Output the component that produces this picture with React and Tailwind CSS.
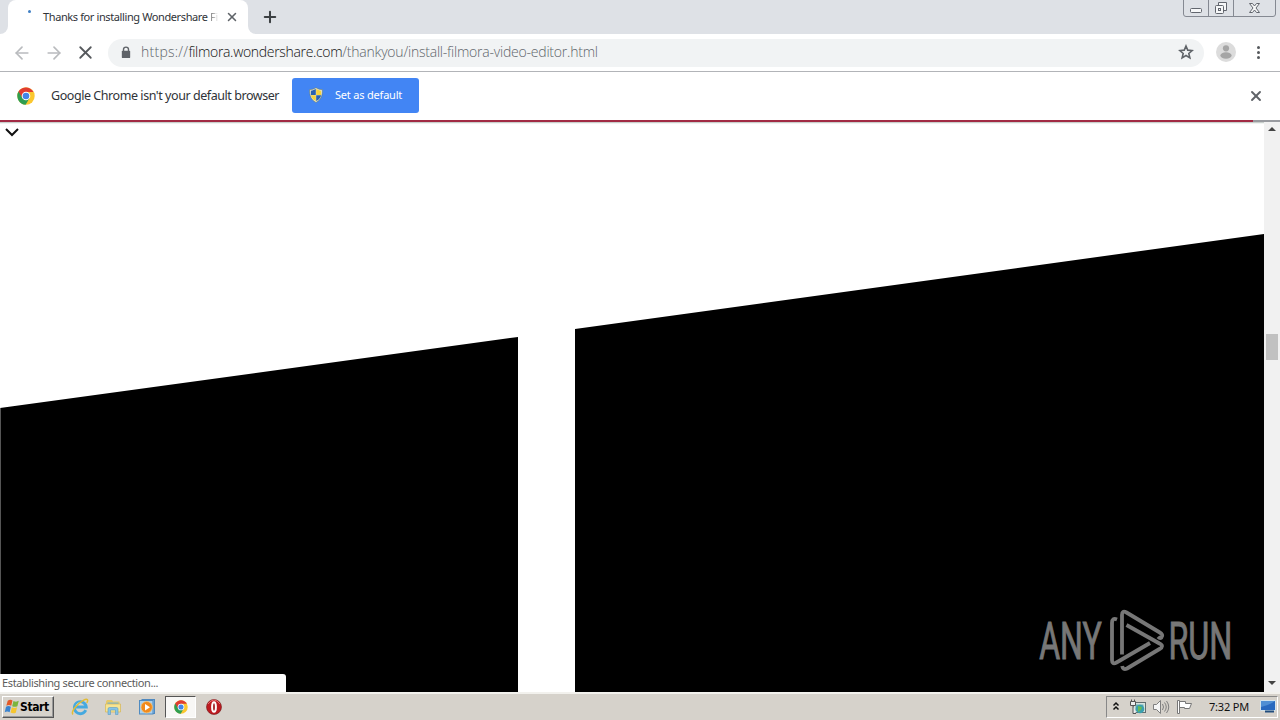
import { ArrowLeft, ArrowRight, Plus, X } from 'lucide-react'

const UI_FONT = "font-['Noto_Sans','Open_Sans',sans-serif]"

function ChromeLogo({ className }) {
  return (
    <svg viewBox="0 0 18 18" className={className}>
      <circle cx="9" cy="9" r="8.7" fill="#fbc72f" />
      <path d="M9 9 1.5 4.6A8.7 8.7 0 0 0 8.6 17.7L12.6 11Z" fill="#2f9e50" />
      <path d="M9 9 5.5 11.2 1.5 4.6A8.7 8.7 0 0 1 16.5 4.9L9 4.9Z" fill="#e03c31" />
      <circle cx="9" cy="9" r="4.3" fill="#fff" />
      <circle cx="9" cy="9" r="3.3" fill="#4285e8" />
    </svg>
  )
}

function Shield() {
  return (
    <svg viewBox="0 0 16 16" className="h-4 w-4">
      <path d="M8 .7C6 2 4 2.5 1.7 2.6 1.4 8 2.7 12.8 8 15.4c5.3-2.6 6.6-7.4 6.3-12.8C12 2.5 10 2 8 .7Z" fill="#e4e6d6" stroke="#69764f" strokeWidth=".5" />
      <path d="M7.8 2.1C6.2 3 4.8 3.5 2.9 3.7v4.2h4.9Z" fill="#2b62b0" />
      <path d="M8.2 2.1c1.6.9 3 1.4 4.9 1.6v4.2H8.2Z" fill="#f7d33c" />
      <path d="M2.9 8.3h4.9v5.8C5 12.7 3.3 10.8 2.9 8.3Z" fill="#f7d33c" />
      <path d="M13.1 8.3H8.2v5.8c2.8-1.4 4.5-3.3 4.9-5.8Z" fill="#2b62b0" />
    </svg>
  )
}

function TabStrip() {
  return (
    <div className="flex h-[34px] shrink-0 bg-[#dee1e6]">
      <div className="flex w-2 items-end bg-white">
        <div className="h-full w-2 rounded-br-lg bg-[#dee1e6]" />
      </div>
      <div className="flex h-full w-[240px] items-center rounded-t-lg bg-white">
        <div className="mb-3 ml-5 h-[3px] w-[3px] rounded-full bg-[#3f7fc4]" />
        <div className="ml-[12px] w-[177px]">
          <div className={`${UI_FONT} whitespace-nowrap text-[11px] tracking-[-0.39px] text-[#303338]`}>
            Thanks for installing Wondershare <span className="bg-linear-to-r from-[#777] to-[#eee] bg-clip-text text-transparent">Fi</span>
          </div>
        </div>
        <X size={14} strokeWidth={2.6} className="ml-[5px] text-[#5f6368]" />
      </div>
      <div className="w-2 bg-white">
        <div className="h-full w-2 rounded-bl-lg bg-[#dee1e6]" />
      </div>
      <div className="flex h-full items-center pl-[5px]">
        <Plus size={18} strokeWidth={2.7} className="text-[#3c4043]" />
      </div>
      <svg viewBox="0 0 94 17" className="ml-auto mr-[3px] h-[17px] w-[94px]" fill="none" stroke="#62666e">
        <path d="M.5 0v14q0 2.500 2.500 2.500h87q2.500 0 2.500-2.500V0M25.500 0v16M50.500 0v16" stroke="#858992" />
        <rect x="7.500" y="8.500" width="11" height="4" rx="1" fill="#f6f7f8" />
        <path d="M35.500 5V2.500h8v8H41" fill="#f6f7f8" />
        <rect x="32.500" y="5.500" width="8" height="8" rx="1" fill="#f6f7f8" />
        <rect x="35.500" y="8.500" width="2" height="2" />
        <path d="M66.500 3.500h3l2 2.500 2-2.500h3l-3.500 4.500 3.500 4.500h-3l-2-2.500-2 2.500h-3L70 8Z" fill="#f6f7f8" />
      </svg>
    </div>
  )
}

function Toolbar() {
  return (
    <div className="flex h-[38px] shrink-0 items-center border-b border-[#b2b4b8] bg-white">
      <ArrowLeft size={20} strokeWidth={2} className="ml-3 text-[#b9bbbe]" />
      <ArrowRight size={20} strokeWidth={2} className="ml-3 text-[#b9bbbe]" />
      <X size={21} strokeWidth={2.1} className="ml-[11px] text-[#55585c]" />
      <div className="ml-3 flex h-7 w-[1096px] items-center rounded-full bg-[#f1f3f4] pl-3">
        <svg viewBox="0 0 12 14" className="h-[13px] w-3">
          <path d="M3.300 6V3.900a2.700 2.700 0 0 1 5.400 0V6" fill="none" stroke="#5f6368" strokeWidth="1.500" />
          <rect x="1.500" y="5" width="9" height="8" rx="1" fill="#5f6368" />
        </svg>
        <div className="-mt-[3px] ml-[9px] flex whitespace-nowrap font-['Open_Sans','Noto_Sans',sans-serif] text-[14px] font-light text-[#60656a]">
          <span className="tracking-[0.25px]">https://</span>
          <span className="tracking-[-0.32px] text-[#111]">filmora.wondershare.com</span>
          <span className="tracking-[-0.22px]">/thankyou/install-filmora-video-editor.html</span>
        </div>
        <svg viewBox="0 0 24 24" className="mb-px ml-auto mr-[10px] h-4 w-4" fill="none" stroke="#5f6368" strokeWidth="2.400">
          <path d="m12 3 2.600 6.200 6.700.6-5.100 4.400 1.600 6.600-5.800-3.500-5.800 3.500 1.600-6.600-5.100-4.400 6.700-.6Z" />
        </svg>
      </div>
      <svg viewBox="0 0 20 20" className="mb-[2px] ml-3 h-5 w-5">
        <circle cx="10" cy="10" r="10" fill="#dcdcdc" />
        <circle cx="10" cy="6.300" r="3.100" fill="#a5a5a5" />
        <ellipse cx="10" cy="13.500" rx="5.600" ry="3.300" fill="#a5a5a5" />
      </svg>
      <div className="ml-[21px] flex flex-col gap-[2px]">
        <i className="size-[3px] rounded-full bg-[#55585c]" />
        <i className="size-[3px] rounded-full bg-[#55585c]" />
        <i className="size-[3px] rounded-full bg-[#55585c]" />
      </div>
    </div>
  )
}

function InfoBar() {
  return (
    <div className="flex h-12 shrink-0 items-center bg-white">
      <ChromeLogo className="ml-[17px] h-[18px] w-[18px]" />
      <div className={`${UI_FONT} ml-4 w-[241px] whitespace-nowrap text-[12.5px] tracking-[-0.44px] text-[#303338]`}>
        Google Chrome isn't your default browser
      </div>
      <button className={`${UI_FONT} mb-[2px] flex h-[35px] w-[127px] items-center rounded-[3px] bg-[#4285f4] pl-4 text-[11px] tracking-[-0.2px] text-white`}>
        <Shield />
        <span className="ml-[11px] whitespace-nowrap">Set as default</span>
      </button>
      <X size={16} strokeWidth={2.8} className="ml-auto mr-4 text-[#5f6368]" />
    </div>
  )
}

function AnyRunLogo() {
  return (
    <svg viewBox="0 0 200 70" className="absolute top-[486px] left-[1035px] h-[70px] w-[200px]">
      <g fill="none" stroke="#777" strokeWidth="3.800" strokeLinejoin="round" strokeLinecap="butt">
        <path d="M82 13.500Q77 11.500 77 17V54q0 5 4.500 2.500L115 37" />
        <path d="M87 48.500V9q0-5 4.500-2.500L124 26q5 3 2.500 5.500-1.500 1.300-3.500-.8" />
        <path d="m91.500 19 33 18.500q5 2.500 0 5.500L92 62.500q-4 2-4.800-2.500" />
      </g>
      <g fill="#777" stroke="#777" strokeWidth="1" fontFamily="Roboto, sans-serif" fontSize="52">
        <text x="9" y="53.500" textLength="136" lengthAdjust="spacingAndGlyphs" transform="scale(.46 1)">ANY</text>
        <text x="290" y="53.500" textLength="139" lengthAdjust="spacingAndGlyphs" transform="scale(.46 1)">RUN</text>
      </g>
    </svg>
  )
}

function Page() {
  return (
    <div className="relative flex h-[572px] shrink-0 flex-col">
      <div className="flex h-[2px] bg-[#999ba0]">
        <div className="w-[1253px] bg-[#a12a44]" />
      </div>
      <div className="flex flex-1">
        <svg viewBox="0 0 1264 570" className="h-[570px] w-[1264px]">
          <path d="M0 0h1264v1H0Z" fill="#c9cfcc" />
          <path d="M0 1h1264v1H0Z" fill="#f1f4f2" />
          <path d="m6 7 6 6 6-6" fill="none" stroke="#111" strokeWidth="2" />
          <path d="M0 286 518 215V570H0ZM575 207 1264 112V570H575Z" fill="#000" />
          <path d="M.5 286V570" stroke="#555" />
        </svg>
        <div className="flex w-4 flex-col items-center bg-[#f1f1f1] pt-[5px] pb-[7px]">
          <i className="border-x-4 border-b-4 border-x-transparent border-b-[#444]" />
          <i className="mt-[203px] h-[26px] w-3 bg-[#c1c1c1]" />
          <i className="mt-auto border-x-4 border-t-4 border-x-transparent border-t-[#444]" />
        </div>
      </div>
      <AnyRunLogo />
      <div className={`${UI_FONT} absolute bottom-0 left-0 flex h-[18px] w-[286px] items-center rounded-tr-[3px] bg-white pl-[2px] text-[11px] tracking-[-0.37px] text-[#5c5c5c]`}>
        Establishing secure connection...
      </div>
    </div>
  )
}

function WindowsFlag() {
  return (
    <svg viewBox="0 0 16 16" className="mb-px h-[17px] w-[17px]">
      <path d="M3.500 2.500q2.300-1.500 4.500-.2L6.800 7.200q-2.300-1.200-4.600.1Z" fill="#e45a28" />
      <path d="M8.900 2.800q2.600 1.400 5-.1l-1.300 5q-2.500 1.300-4.900 0Z" fill="#7bb43c" />
      <path d="M1.900 8.300q2.300-1.400 4.600 0l-1.200 5q-2.300-1.300-4.600 0Z" fill="#3a83cf" />
      <path d="M7.400 8.700q2.400 1.400 4.900.1l-1.200 5q-2.600 1.300-4.900-.1Z" fill="#f6c52e" />
    </svg>
  )
}

function ExplorerIcon() {
  return (
    <svg viewBox="0 0 18 18" className="h-[18px] w-[18px]" fill="none">
      <path d="M14.800 12.200A6 6 0 1 1 15.300 9H5" stroke="#45a9df" strokeWidth="2.800" />
      <path d="M5 7.500Q6 5 9 4.600" stroke="#a5e1f8" />
      <path d="M2.200 16.300C-.8 15 5 6 12.300 2.300 16.500.2 17.600 1.800 15.800 5" stroke="#e3bd35" strokeWidth="1.500" />
    </svg>
  )
}

function FolderIcon() {
  return (
    <svg viewBox="0 0 18 18" className="h-[18px] w-[18px]">
      <path d="M2 3.500 3 2h5l1 1.500h6.500V13H2Z" fill="#e7c967" />
      <path d="M3.500 4.500h11V9h-11Z" fill="#80b7cc" />
      <path d="M1.500 6h15v8h-15Z" fill="#f6e493" stroke="#d5b655" strokeWidth=".7" />
      <path d="M4 16.500V11q0-1.500 1.500-1.500h7Q14 9.500 14 11v5.500h-2.500V12h-5v4.500Z" fill="#86c4e5" stroke="#5a9bc4" strokeWidth=".6" />
    </svg>
  )
}

function MediaIcon() {
  return (
    <svg viewBox="0 0 16 16" className="h-4 w-4">
      <rect x="3" y=".5" width="12.500" height="14" fill="#86b8e4" stroke="#5089bf" />
      <rect x=".5" y="1.500" width="13.500" height="13.500" fill="#a9d0ee" stroke="#4f8bc1" />
      <circle cx="7.700" cy="8.200" r="5.700" fill="#f18a1c" stroke="#f5c174" strokeWidth=".8" />
      <path d="m6 5 5 3.200-5 3.300Z" fill="#fff" />
    </svg>
  )
}

function Tray() {
  return (
    <div className="ml-auto mr-[2px] flex h-[22px] w-[172px] items-center border border-t-[#888] border-r-white border-b-white border-l-[#888] pl-[5px]">
      <svg viewBox="0 0 8 10" className="mb-[2px] h-[10px] w-2" fill="none" stroke="#111" strokeWidth="1.500">
        <path d="m1.500 4.500 2.500-2.500 2.500 2.500M1.500 8.500 4 6l2.500 2.500" />
      </svg>
      <svg viewBox="0 0 17 16" className="ml-[9px] h-4 w-[17px]">
        <rect x="4.500" y="3.500" width="12" height="10" fill="#d8e4df" stroke="#626e70" />
        <rect x="6.500" y="5.500" width="8" height="6" fill="#65aeb5" />
        <circle cx="11" cy="10" r="4.300" fill="#3b9faf" />
        <path d="m9 7 4 1-1 3-3 2Z" fill="#69ba55" />
        <path d="M1.500 2.500h5v4h-5ZM2.500.5v2M5.500.5v2M4 6.500v8h3" fill="#eee" stroke="#555" />
      </svg>
      <svg viewBox="0 0 18 16" className="ml-[6px] h-4 w-[18px]" fill="none" stroke="#7f7f7f">
        <path d="M1.500 5.500h3l4-4v13l-4-4h-3Z" fill="#f5f5f5" />
        <path d="M10.500 5q2 3 0 6M12.500 3.500q3.500 4.500 0 9M14.500 2q4.500 6 0 12" />
      </svg>
      <svg viewBox="0 0 18 16" className="ml-[6px] h-4 w-[18px]">
        <path d="M3.500 2.500h6v2h6l-2 5H8.500v-1h-5" fill="#fff" stroke="#777" />
        <path d="M1.500 1.500h2v13h-2Z" fill="#fff" stroke="#777" />
      </svg>
      <span className="ml-[15px] whitespace-nowrap font-['Noto_Sans',sans-serif] text-[11px] tracking-[-0.2px] text-[#111]">7:32 PM</span>
      <svg viewBox="0 0 16 14" className="mb-[2px] ml-auto mr-[1px] h-[14px] w-4">
        <path d="M.5 1.500h15v10H.5Z" fill="#2869bf" stroke="#d3e3ec" />
        <path d="M1 2h14q-5 4-14 6Z" fill="#4f8fd4" />
        <path d="M5 11.500h9v2H5Z" fill="#204c7c" />
      </svg>
    </div>
  )
}

function Taskbar() {
  return (
    <div className="flex h-7 shrink-0 items-center border-t-[2px] border-[#f2f1ed] bg-[#d6d2cb] pl-[2px]">
      <button className="flex h-[22px] w-[52px] items-center border border-t-white border-r-[#555] border-b-[#555] border-l-white pl-[1px] shadow-[inset_-1px_-1px_#999]">
        <WindowsFlag />
        <span className="-ml-px whitespace-nowrap font-['DejaVu_Sans_Condensed','DejaVu_Sans',sans-serif] text-[12px] font-bold tracking-[-0.4px] text-black">Start</span>
      </button>
      <div className="ml-[17px] flex items-center">
        <ExplorerIcon />
        <div className="ml-[15px]"><FolderIcon /></div>
        <div className="ml-[17px]"><MediaIcon /></div>
        <div className="ml-[10px] flex h-[22px] w-[31px] items-center justify-center border border-t-[#555] border-r-white border-b-white border-l-[#555] bg-[#f8f7f5]">
          <ChromeLogo className="h-[14px] w-[14px]" />
        </div>
        <svg viewBox="0 0 16 16" className="ml-[10px] h-4 w-4">
          <circle cx="8" cy="8" r="7.500" fill="#bd1a20" stroke="#70191b" strokeWidth=".6" />
          <path d="M2 5q6-8 12 0" fill="none" stroke="#e9666a" />
          <ellipse cx="8" cy="8" rx="1.900" ry="4.800" fill="#a11a1e" stroke="#fff" strokeWidth="2" />
        </svg>
      </div>
      <Tray />
    </div>
  )
}

export default function App() {
  return (
    <div className="flex h-[720px] w-[1280px] flex-col overflow-hidden bg-white">
      <TabStrip />
      <Toolbar />
      <InfoBar />
      <Page />
      <Taskbar />
    </div>
  )
}
